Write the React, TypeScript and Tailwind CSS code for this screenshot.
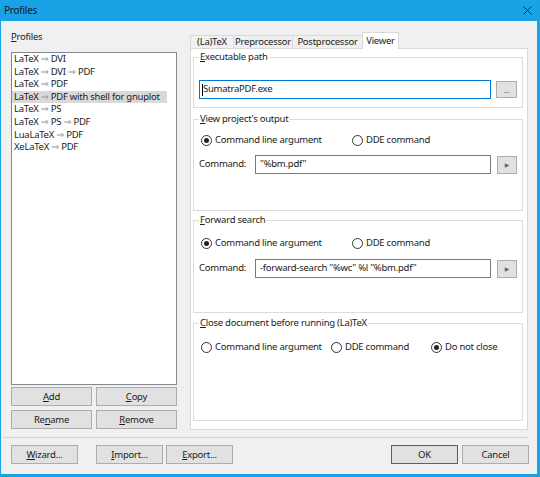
import React from "react";

const profiles = [
  ["LaTeX", "DVI"],
  ["LaTeX", "DVI", "PDF"],
  ["LaTeX", "PDF"],
  ["LaTeX", "PDF with shell for gnuplot"],
  ["LaTeX", "PS"],
  ["LaTeX", "PS", "PDF"],
  ["LuaLaTeX", "PDF"],
  ["XeLaTeX", "PDF"],
];

function U({ children }: { children: React.ReactNode }) {
  return <span className="underline underline-offset-[1px]">{children}</span>;
}

function Btn({ children, className = "" }: { children: React.ReactNode; className?: string }) {
  return (
    <div
      className={`h-[19px] border border-[#adadad] bg-[#e1e1e1] flex items-center justify-center leading-none ${className}`}
    >
      {children}
    </div>
  );
}

function Radio({ label, checked = false, className = "" }: { label: string; checked?: boolean; className?: string }) {
  return (
    <div className={`flex items-center gap-[3px] h-[14px] whitespace-nowrap ${className}`}>
      <span className="w-[11px] h-[11px] rounded-full border border-[#333] bg-white flex items-center justify-center shrink-0">
        {checked && <span className="w-[5px] h-[5px] rounded-full bg-[#222]" />}
      </span>
      <span>{label}</span>
    </div>
  );
}

function Group({ title, className = "", children }: { title: React.ReactNode; className?: string; children: React.ReactNode }) {
  return (
    <fieldset className={`border border-[#dcdcdc] px-[5px] ${className}`}>
      <legend className="px-[1px] leading-[14px]">{title}</legend>
      {children}
    </fieldset>
  );
}

function Arrow() {
  return <span className="text-[6px] text-[#666]">▶</span>;
}

function Tab({ label, active = false, className = "" }: { label: string; active?: boolean; className?: string }) {
  return (
    <div
      className={
        active
          ? `h-[17px] -mb-px z-10 bg-white border border-b-0 border-[#d9d9d9] flex items-center justify-center whitespace-nowrap ${className}`
          : `h-[13px] bg-[#f0f0f0] border border-b-0 border-r-0 border-[#d9d9d9] flex items-center justify-center whitespace-nowrap ${className}`
      }
    >
      {label}
    </div>
  );
}

export default function App() {
  return (
    <div className="w-[540px] h-[477px] bg-[#19a2e6] flex flex-col font-['Noto_Sans','DejaVu_Sans',sans-serif] text-[9.5px] tracking-[-0.25px] text-[#1b1b1b]">
      <div className="h-[21px] flex items-center justify-between pl-[4px] pr-[8px]">
        <span className="text-[10px] text-[#0d1b2a]">Profiles</span>
        <svg width="9" height="9" viewBox="0 0 9 9" fill="none">
          <path d="M0.5 0.5 L8.5 8.5 M8.5 0.5 L0.5 8.5" stroke="#15324a" strokeWidth="1" />
        </svg>
      </div>

      <div className="flex-1 ml-[1px] mr-[3px] mb-[3px] bg-[#f0f0f0] flex flex-col">
        <div className="flex pl-[10px] h-[409px]">
          {/* profiles column */}
          <div className="w-[166px] flex flex-col pt-[9px]">
            <div className="h-[22px] leading-[14px]">
              <U>P</U>rofiles
            </div>
            <div className="h-[333px] border border-[#828790] bg-white flex flex-col">
              {profiles.map((parts, i) => (
                <div key={i} className="h-[12.6px] leading-[12.6px] flex whitespace-nowrap">
                  <span className={`pl-[2px] ${i === 3 ? "w-[155px] bg-[#d9d9d9]" : ""}`}>
                    {parts.map((p, j) => (
                      <React.Fragment key={j}>
                        {j > 0 && <span className="text-[#9a9a9a]"> ⇒ </span>}
                        {p}
                      </React.Fragment>
                    ))}
                  </span>
                </div>
              ))}
            </div>
            <div className="mt-[2px] grid grid-cols-2 gap-[4px]">
              <Btn>
                <U>A</U>dd
              </Btn>
              <Btn>
                <U>C</U>opy
              </Btn>
              <Btn>
                Re<U>n</U>ame
              </Btn>
              <Btn>
                <U>R</U>emove
              </Btn>
            </div>
          </div>

          {/* tab widget */}
          <div className="ml-[13px] w-[338px] flex flex-col pt-[11px]">
            <div className="h-[16px] flex items-end">
              <Tab label="(La)TeX" className="w-[43px]" />
              <Tab label="Preprocessor" className="w-[59px]" />
              <Tab label="Postprocessor" className="w-[70px]" />
              <Tab label="Viewer" active className="w-[37px]" />
            </div>
            <div className="h-[382px] border border-[#d9d9d9] bg-white pl-[2px] pr-[4px] flex flex-col">
              <Group
                className="mt-[1px] h-[58px]"
                title={
                  <>
                    <U>E</U>xecutable path
                  </>
                }
              >
                <div className="mt-[16px] flex items-center">
                  <div className="w-[292px] h-[19px] border border-[#0078d7] flex items-center pl-[2px]">
                    <span className="w-px h-[12px] bg-black" />
                    <span>SumatraPDF.exe</span>
                  </div>
                  <Btn className="ml-[5px] w-[21px] !h-[17px] text-[8px] text-[#555]">...</Btn>
                </div>
              </Group>

              <Group
                className="mt-[4px] h-[99px]"
                title={
                  <>
                    <U>V</U>iew project's output
                  </>
                }
              >
                <div className="mt-[7px] flex pl-[2px]">
                  <Radio label="Command line argument" checked className="w-[151px]" />
                  <Radio label="DDE command" />
                </div>
                <div className="mt-[8px] flex items-center">
                  <span className="w-[56px]">Command:</span>
                  <div className="w-[236px] h-[19px] border border-[#7a7a7a] flex items-center pl-[4px]">
                    "%bm.pdf"
                  </div>
                  <Btn className="ml-[6px] w-[20px] !h-[18px]">
                    <Arrow />
                  </Btn>
                </div>
              </Group>

              <Group
                className="mt-[2px] h-[100px]"
                title={
                  <>
                    <U>F</U>orward search
                  </>
                }
              >
                <div className="mt-[9px] flex pl-[2px]">
                  <Radio label="Command line argument" checked className="w-[151px]" />
                  <Radio label="DDE command" />
                </div>
                <div className="mt-[9px] flex items-center">
                  <span className="w-[56px]">Command:</span>
                  <div className="w-[236px] h-[19px] border border-[#7a7a7a] flex items-center pl-[4px]">
                    -forward-search "%wc" %l "%bm.pdf"
                  </div>
                  <Btn className="ml-[6px] w-[20px] !h-[18px]">
                    <Arrow />
                  </Btn>
                </div>
              </Group>

              <Group
                className="mt-[3px] h-[105px]"
                title={
                  <>
                    <U>C</U>lose document before running (La)TeX
                  </>
                }
              >
                <div className="mt-[10px] flex pl-[2px]">
                  <Radio label="Command line argument" className="w-[130px]" />
                  <Radio label="DDE command" className="w-[100px]" />
                  <Radio label="Do not close" checked />
                </div>
              </Group>
            </div>
          </div>
        </div>

        <div className="mt-[7px] ml-[2px] w-[525px] h-px bg-[#d5d5d5]" />

        <div className="mt-[7px] flex pl-[10px] pr-[8px]">
          <Btn className="w-[67px]">
            <U>W</U>izard...
          </Btn>
          <Btn className="ml-[18px] w-[67px]">
            <U>I</U>mport...
          </Btn>
          <Btn className="ml-[3px] w-[67px]">
            <U>E</U>xport...
          </Btn>
          <div className="flex-1" />
          <Btn className="w-[67px] !border-[#0078d7]">OK</Btn>
          <Btn className="ml-[4px] w-[67px]">Cancel</Btn>
        </div>
      </div>
    </div>
  );
}
